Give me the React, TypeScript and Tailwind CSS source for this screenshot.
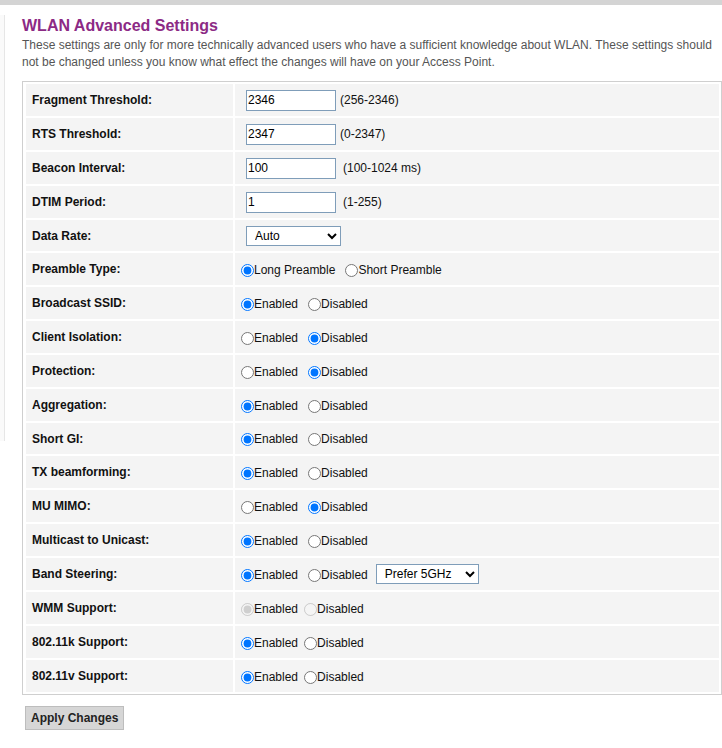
import React from "react";

type Row =
  | { label: string; kind: "text"; value: string; hint: string; hintGap?: boolean }
  | { label: string; kind: "select"; value: string; options: string[] }
  | {
      label: string;
      kind: "radio";
      name: string;
      options: [string, string];
      checked: 0 | 1;
      disabled?: boolean;
      tight?: boolean;
      extraSelect?: string;
    };

const rows: Row[] = [
  { label: "Fragment Threshold:", kind: "text", value: "2346", hint: "(256-2346)" },
  { label: "RTS Threshold:", kind: "text", value: "2347", hint: "(0-2347)" },
  { label: "Beacon Interval:", kind: "text", value: "100", hint: "(100-1024 ms)", hintGap: true },
  { label: "DTIM Period:", kind: "text", value: "1", hint: "(1-255)", hintGap: true },
  { label: "Data Rate:", kind: "select", value: "Auto", options: ["Auto", "1M", "2M", "5.5M", "11M"] },
  { label: "Preamble Type:", kind: "radio", name: "preamble", options: ["Long Preamble", "Short Preamble"], checked: 0 },
  { label: "Broadcast SSID:", kind: "radio", name: "ssid", options: ["Enabled", "Disabled"], checked: 0 },
  { label: "Client Isolation:", kind: "radio", name: "iso", options: ["Enabled", "Disabled"], checked: 1 },
  { label: "Protection:", kind: "radio", name: "prot", options: ["Enabled", "Disabled"], checked: 1 },
  { label: "Aggregation:", kind: "radio", name: "aggr", options: ["Enabled", "Disabled"], checked: 0 },
  { label: "Short GI:", kind: "radio", name: "sgi", options: ["Enabled", "Disabled"], checked: 0 },
  { label: "TX beamforming:", kind: "radio", name: "txbf", options: ["Enabled", "Disabled"], checked: 0 },
  { label: "MU MIMO:", kind: "radio", name: "mumimo", options: ["Enabled", "Disabled"], checked: 1 },
  { label: "Multicast to Unicast:", kind: "radio", name: "m2u", options: ["Enabled", "Disabled"], checked: 0 },
  {
    label: "Band Steering:",
    kind: "radio",
    name: "steer",
    options: ["Enabled", "Disabled"],
    checked: 0,
    extraSelect: "Prefer 5GHz",
  },
  { label: "WMM Support:", kind: "radio", name: "wmm", options: ["Enabled", "Disabled"], checked: 0, disabled: true, tight: true },
  { label: "802.11k Support:", kind: "radio", name: "dot11k", options: ["Enabled", "Disabled"], checked: 0, tight: true },
  { label: "802.11v Support:", kind: "radio", name: "dot11v", options: ["Enabled", "Disabled"], checked: 0, tight: true },
];

// a couple of rows come out a pixel shorter (select / short label rows)
const shortRows = ["Data Rate:", "Short GI:"];

const ValueCell = ({ row }: { row: Row }) => {
  if (row.kind === "text") {
    return (
      <div className="flex items-center">
        <input
          type="text"
          defaultValue={row.value}
          className="ml-[10px] h-[21px] w-[90px] border border-[#7f9db9] bg-white px-[1px] text-[12px] text-black outline-none"
        />
        <span className={row.hintGap ? "ml-[7px]" : "ml-[4px]"}>{row.hint}</span>
      </div>
    );
  }
  if (row.kind === "select") {
    return (
      <select
        defaultValue={row.value}
        className="ml-[10px] h-[20px] w-[95px] border border-[#7f9db9] bg-white pl-[4px] text-[12px] text-black"
      >
        {row.options.map((o) => (
          <option key={o}>{o}</option>
        ))}
      </select>
    );
  }
  return (
    <div className="flex items-center">
      {row.options.map((opt, i) => (
        <label key={opt} className="flex items-center">
          <input
            type="radio"
            name={row.name}
            defaultChecked={row.checked === i}
            disabled={row.disabled}
            className={`${i === 0 ? "ml-[5px]" : row.tight ? "ml-[6px]" : "ml-[10px]"} mt-[2px] h-[13px] w-[13px]`}
          />
          <span className="mt-[1px]">{opt}</span>
        </label>
      ))}
      {row.extraSelect && (
        <select
          defaultValue={row.extraSelect}
          className="ml-[8px] h-[20px] w-[103px] border border-[#7f9db9] bg-white pl-[4px] text-[12px] text-black"
        >
          <option>Prefer 5GHz</option>
          <option>Prefer 2.4GHz</option>
        </select>
      )}
    </div>
  );
};

export default function App() {
  return (
    <div className="min-h-[748px] bg-white font-['Liberation_Sans',Arial,sans-serif] text-[12px] text-[#111]">
      <div className="h-[5px] bg-[#d4d4d4]" />
      <div className="flex">
        {/* collapsed side frame */}
        <div className="mt-[10px] h-[426px] w-[5px] border-r border-[#e6e6e6] bg-[#fafafa]" />

        <main className="pl-[17px]">
          <h1 className="mt-[11px] text-[16px] font-bold leading-[20px] text-[#8c2a85]">WLAN Advanced Settings</h1>
          <p className="mt-[1px] w-[700px] leading-[17px] text-[#555]">
            These settings are only for more technically advanced users who have a sufficient knowledge about WLAN.
            These settings should not be changed unless you know what effect the changes will have on your Access Point.
          </p>

          <div className="mt-[10px] grid w-[700px] grid-cols-[207px_1fr] gap-[2px] border border-[#cfcfcf] py-[2px] pl-[3px] pr-[2px]">
            {rows.map((row) => {
              const h = shortRows.includes(row.label) ? "h-[31px]" : "h-[32px]";
              return (
                <React.Fragment key={row.label}>
                  <div className={`flex ${h} items-center bg-[#f4f4f4] pl-[6px] font-bold`}>{row.label}</div>
                  <div className={`flex ${h} items-center bg-[#f4f4f4] pl-[1px]`}>
                    <ValueCell row={row} />
                  </div>
                </React.Fragment>
              );
            })}
          </div>

          <button className="ml-[3px] mt-[11px] h-[24px] border border-[#bdbdbd] bg-[#d6d6d6] px-[5px] text-[12px] font-bold text-[#222]">
            Apply Changes
          </button>
        </main>
      </div>
    </div>
  );
}
